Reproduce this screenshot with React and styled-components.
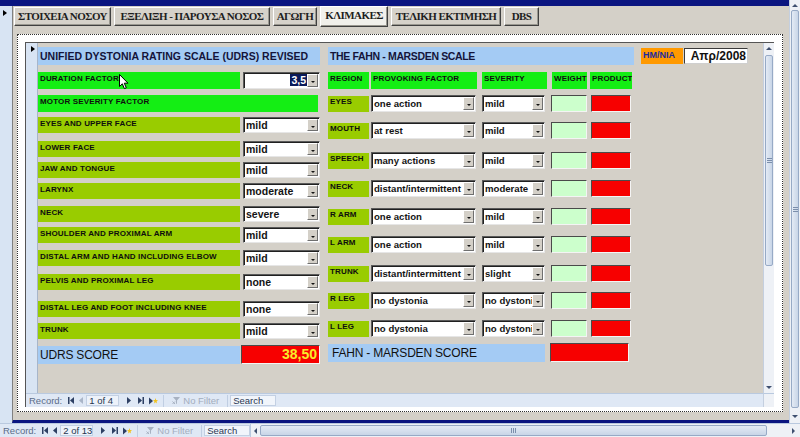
import React from 'react';
import styled, { createGlobalStyle } from 'styled-components';

const Global = createGlobalStyle`
  html, body {
    margin: 0;
    padding: 0;
    background: #d4d0c8;
  }
  body {
    width: 800px;
    height: 437px;
    overflow: hidden;
    font-family: "Liberation Sans", Arial, sans-serif;
  }
`;

const NAVY = '#0a1580';
const GRAY = '#d4d0c8';
const SEL = '#d8e4f3';
const SKY = '#a4cbf4';
const LIME = '#14ee14';
const OLIVE = '#99cc00';
const RED = '#f70000';

const Screen = styled.div`
  width: 800px;
  height: 437px;
  display: flex;
  flex-direction: column;
  overflow: hidden;
  position: relative;
`;

const Window = styled.div`
  height: 423px;
  display: flex;
`;

const LeftPane = styled.div`
  flex: 1;
  display: flex;
  flex-direction: column;
`;

const NavyTop = styled.div`
  height: 6px;
  background: ${NAVY};
`;

const Body = styled.div`
  flex: 1;
  display: flex;
`;

const Selector = styled.div`
  width: ${p => p.$w}px;
  background: ${SEL};
  flex: none;
  padding-top: ${p => p.$top}px;
  padding-left: ${p => p.$left}px;
  box-sizing: border-box;
  border-right: ${p => (p.$line ? '1px solid #a7b5c9' : 'none')};
`;

const Pointer = styled.div`
  width: 0;
  height: 0;
  border-top: 3px solid transparent;
  border-bottom: 3px solid transparent;
  border-left: 4px solid #000;
`;

const FormArea = styled.div`
  flex: 1;
  display: flex;
  flex-direction: column;
  background: ${GRAY};
  border-left: 1px solid #808080;
  border-bottom: 3px solid ${NAVY};
`;

const Tabs = styled.div`
  height: 21px;
  display: flex;
  gap: 3px;
  padding: 1px 0 0 1px;
  box-sizing: border-box;
`;

const Tab = styled.div`
  width: ${p => p.$w}px;
  height: ${p => (p.$active ? 21 : 19)}px;
  margin-top: ${p => (p.$active ? -1 : 0)}px;
  box-sizing: border-box;
  background: ${p => (p.$active ? '#f1f0eb' : '#d6d2ca')};
  border: 1px solid;
  border-color: #ffffff #404040 #404040 #ffffff;
  box-shadow: inset -1px -1px 0 #9a9890;
  font: bold 11px/17px "Liberation Serif", "Times New Roman", serif;
  letter-spacing: -0.55px;
  color: #1e1e1e;
  text-align: center;
  white-space: nowrap;
  overflow: hidden;
`;

const TabPage = styled.div`
  flex: 1;
  display: flex;
  padding: 7px 6px 8px 4px;
`;

const Dotted = styled.div`
  flex: 1;
  display: flex;
  background: #fff;
  border: 1px dotted #303030;
  padding: 7px 8px 4px 7px;
`;

const Subform = styled.div`
  flex: 1;
  display: grid;
  grid-template-columns: 12px 1fr 11px;
  grid-template-rows: 1fr 14px;
  border-top: 1px solid #555;
  border-left: 1px solid #555;
`;

const Content = styled.div`
  background: ${GRAY};
  display: flex;
  padding-top: 4px;
  position: relative;
`;

const Column = styled.div`
  width: ${p => p.$w}px;
  margin-left: ${p => p.$ml || 0}px;
  display: flex;
  flex-direction: column;
`;

const Row = styled.div`
  display: flex;
  align-items: ${p => p.$align || 'flex-start'};
  gap: ${p => p.$gap || 0}px;
  margin-top: ${p => p.$mt || 0}px;
`;

const Title = styled.div`
  width: ${p => p.$w}px;
  height: 18px;
  background: ${SKY};
  font: bold 10.5px/19px "Liberation Sans", Arial, sans-serif;
  letter-spacing: ${p => p.$ls || 0}px;
  color: #14143a;
  padding-left: 2px;
  box-sizing: border-box;
  white-space: nowrap;
`;

const Label = styled.div`
  width: ${p => p.$w}px;
  height: ${p => p.$h || 17}px;
  margin-left: ${p => p.$ml || 0}px;
  margin-top: ${p => p.$top || 0}px;
  background: ${p => p.$bg};
  font: bold 8px/10px "Liberation Sans", Arial, sans-serif;
  letter-spacing: 0.15px;
  color: #0e0e0e;
  padding: ${p => (p.$pad != null ? p.$pad : 2)}px 2px 0;
  box-sizing: border-box;
  white-space: nowrap;
  overflow: hidden;
  flex: none;
`;

const Combo = styled.div`
  width: ${p => p.$w}px;
  height: ${p => p.$h || 17}px;
  margin-left: ${p => p.$ml || 0}px;
  box-sizing: border-box;
  background: #fff;
  border: 1px solid;
  border-color: #5a5a5a #e6e6e6 #e6e6e6 #5a5a5a;
  box-shadow: inset 1px 1px 0 #202020;
  display: flex;
  flex: none;
`;

const ComboText = styled.div`
  flex: 1;
  min-width: 0;
  overflow: hidden;
  white-space: nowrap;
  padding-left: 2px;
  font: bold ${p => p.$size}px/${p => p.$lh}px "Liberation Sans", Arial, sans-serif;
  color: #141414;
  text-align: ${p => (p.$right ? 'right' : 'left')};
`;

const Picked = styled.span`
  background: #0a1a5a;
  color: #fff;
  padding: 0 1px;
`;

const DropBtn = styled.div`
  width: 11px;
  margin: 1px 1px 1px 0;
  background: ${GRAY};
  border: 1px solid;
  border-color: #fff #6f6f6f #6f6f6f #fff;
  box-sizing: border-box;
  display: flex;
  align-items: center;
  justify-content: center;
  flex: none;
  &::before {
    content: '';
    border-left: 2px solid transparent;
    border-right: 2px solid transparent;
    border-top: 2px solid #111;
    margin-top: 3px;
  }
`;

const Box = styled.div`
  width: ${p => p.$w}px;
  height: ${p => p.$h || 17}px;
  margin-left: ${p => p.$ml || 0}px;
  background: ${p => p.$bg};
  box-sizing: border-box;
  border: 1px solid;
  border-color: #4a4a4a #f4f4f4 #f4f4f4 #4a4a4a;
  flex: none;
  font: bold 14px/17px "Liberation Sans", Arial, sans-serif;
  color: #f8ec2a;
  text-align: right;
  padding-right: 2px;
`;

const Score = styled.div`
  width: ${p => p.$w}px;
  height: 18px;
  background: ${SKY};
  font: 12px/19px "Liberation Sans", Arial, sans-serif;
  letter-spacing: -0.2px;
  color: #111;
  padding-left: ${p => p.$pl}px;
  box-sizing: border-box;
  white-space: nowrap;
`;

const DateTag = styled.div`
  width: 42px;
  height: 16px;
  background: #ff9900;
  font: bold 9px/15px "Liberation Sans", Arial, sans-serif;
  color: #1c2b9e;
  padding-left: 2px;
  box-sizing: border-box;
`;

const DateValue = styled.div`
  width: 64px;
  height: 16px;
  margin-left: 1px;
  background: #fff;
  border: 1px solid;
  border-color: #3a3a3a #cfcfcf #cfcfcf #3a3a3a;
  box-sizing: border-box;
  font: bold 12px/14px "Liberation Sans", Arial, sans-serif;
  color: #111;
  text-align: right;
  padding-right: 1px;
`;

const ScrollCol = styled.div`
  width: ${p => p.$w}px;
  flex: none;
  display: flex;
  flex-direction: column;
  background: #eef1f6;
  border-left: 1px solid #c4cfdf;
  box-sizing: border-box;
`;

const Arrow = styled.div`
  height: ${p => p.$h}px;
  flex: none;
  display: flex;
  align-items: center;
  justify-content: center;
  &::before {
    content: '';
    border-left: 3px solid transparent;
    border-right: 3px solid transparent;
    ${p => (p.$down ? 'border-top: 3px solid #3f5070;' : 'border-bottom: 3px solid #3f5070;')}
  }
`;

const Track = styled.div`
  flex: 1;
  padding: 0 1px;
  display: flex;
  flex-direction: column;
`;

const Thumb = styled.div`
  height: ${p => p.$h}px;
  margin-top: ${p => p.$top}px;
  background: linear-gradient(to right, #e4ebf5, #c8d5e7);
  border: 1px solid #97aac6;
  border-radius: 2px;
  box-sizing: border-box;
  display: flex;
  align-items: center;
  justify-content: center;
  &::after {
    content: '';
    width: 5px;
    height: 5px;
    background: repeating-linear-gradient(to bottom, #7b8eab 0 1px, transparent 1px 2px);
  }
`;

const Corner = styled.div`
  background: #eef1f6;
  border-left: 1px solid #c4cfdf;
  border-top: 1px solid #b9c9df;
`;

const NavBar = styled.div`
  display: flex;
  align-items: center;
  width: ${p => (p.$w ? `${p.$w}px` : 'auto')};
  grid-column: ${p => p.$span || 'auto'};
  flex: none;
  background: #dfe8f5;
  border-top: 1px solid #b9c9df;
  box-sizing: border-box;
  font: 9.5px "Liberation Sans", Arial, sans-serif;
  color: #5b6c88;
  white-space: nowrap;
  overflow: hidden;
`;

const NavText = styled.span`
  margin-left: ${p => p.$ml}px;
  color: ${p => p.$c || '#5b6c88'};
`;

const NavIcon = styled.svg`
  margin-left: ${p => p.$ml}px;
  flex: none;
`;

const RecBox = styled.span`
  margin-left: ${p => p.$ml}px;
  width: 33px;
  height: 11px;
  background: #edf2fa;
  border: 1px solid #c3d0e3;
  box-sizing: border-box;
  font-size: 9.5px;
  line-height: 10px;
  color: #26344e;
  padding-left: 2px;
  flex: none;
`;

const Sep = styled.span`
  margin-left: ${p => p.$ml}px;
  width: 1px;
  height: 12px;
  background: #c0cee2;
  flex: none;
`;

const SearchBox = styled.span`
  margin-left: ${p => p.$ml}px;
  width: 46px;
  height: 11px;
  background: #f1f5fb;
  border: 1px solid #c3d0e3;
  box-sizing: border-box;
  font-size: 9.5px;
  line-height: 10px;
  color: #2b3852;
  padding-left: 2px;
  flex: none;
`;

const BottomBar = styled.div`
  height: 14px;
  display: flex;
`;

const HScroll = styled.div`
  flex: 1;
  display: flex;
  align-items: stretch;
  background: #eef1f6;
  border-top: 1px solid #b9c9df;
  border-left: 1px solid #b9c9df;
`;

const HArrow = styled.div`
  width: ${p => p.$w}px;
  display: flex;
  align-items: center;
  justify-content: center;
  &::before {
    content: '';
    border-top: 3px solid transparent;
    border-bottom: 3px solid transparent;
    ${p => (p.$right ? 'border-left: 3px solid #3f5070;' : 'border-right: 3px solid #3f5070;')}
  }
`;

const HThumb = styled.div`
  width: ${p => p.$w}px;
  margin: 1px 0 1px ${p => p.$ml}px;
  background: linear-gradient(to bottom, #e4ebf5, #c8d5e7);
  border: 1px solid #97aac6;
  border-radius: 2px;
  box-sizing: border-box;
  display: flex;
  align-items: center;
  justify-content: center;
  &::after {
    content: '';
    width: 5px;
    height: 5px;
    background: repeating-linear-gradient(to right, #7b8eab 0 1px, transparent 1px 2px);
  }
`;

const Filler = styled.div`
  flex: 1;
`;

const Cursor = styled.svg`
  position: absolute;
  left: ${p => p.$x}px;
  top: ${p => p.$y}px;
`;

const tabs = [
  { text: 'ΣΤΟΙΧΕΙΑ ΝΟΣΟΥ', w: 97 },
  { text: 'ΕΞΕΛΙΞΗ - ΠΑΡΟΥΣΑ ΝΟΣΟΣ', w: 156 },
  { text: 'ΑΓΩΓΗ', w: 44 },
  { text: 'ΚΛΙΜΑΚΕΣ', w: 68, active: true },
  { text: 'ΤΕΛΙΚΗ ΕΚΤΙΜΗΣΗ', w: 110 },
  { text: 'DBS', w: 35 },
];

const udrsRows = [
  { label: 'EYES AND UPPER FACE', value: 'mild', mt: 5 },
  { label: 'LOWER FACE', value: 'mild', mt: 8 },
  { label: 'JAW AND TONGUE', value: 'mild', mt: 5 },
  { label: 'LARYNX', value: 'moderate', mt: 5 },
  { label: 'NECK', value: 'severe', mt: 7 },
  { label: 'SHOULDER AND PROXIMAL ARM', value: 'mild', mt: 5 },
  { label: 'DISTAL ARM AND HAND INCLUDING ELBOW', value: 'mild', mt: 7 },
  { label: 'PELVIS AND PROXIMAL LEG', value: 'none', mt: 8 },
  { label: 'DISTAL LEG AND FOOT INCLUDING KNEE', value: 'none', mt: 11 },
  { label: 'TRUNK', value: 'mild', mt: 6 },
];

const fahnHead = [
  { text: 'REGION', w: 41, ml: 0 },
  { text: 'PROVOKING FACTOR', w: 106, ml: 2 },
  { text: 'SEVERITY', w: 65, ml: 5 },
  { text: 'WEIGHT', w: 35, ml: 5 },
  { text: 'PRODUCT', w: 42, ml: 3 },
];

const fahnRows = [
  { region: 'EYES', factor: 'one action', severity: 'mild', mt: 6 },
  { region: 'MOUTH', factor: 'at rest', severity: 'mild', mt: 10 },
  { region: 'SPEECH', factor: 'many actions', severity: 'mild', mt: 13 },
  { region: 'NECK', factor: 'distant/intermittent', severity: 'moderate', mt: 11 },
  { region: 'R ARM', factor: 'one action', severity: 'mild', mt: 11 },
  { region: 'L ARM', factor: 'one action', severity: 'mild', mt: 11 },
  { region: 'TRUNK', factor: 'distant/intermittent', severity: 'slight', mt: 12 },
  { region: 'R LEG', factor: 'no dystonia', severity: 'no dystonia', mt: 10 },
  { region: 'L LEG', factor: 'no dystonia', severity: 'no dystonia', mt: 11 },
];

const Select = ({ w, h = 17, ml, size, children, right }) => (
  <Combo $w={w} $h={h} $ml={ml}>
    <ComboText $size={size} $lh={h - 2} $right={right}>{children}</ComboText>
    <DropBtn />
  </Combo>
);

const First = ({ ml }) => (
  <NavIcon $ml={ml} width="6" height="7" viewBox="0 0 6 7">
    <rect x="0" y="0" width="1.5" height="7" fill="#2d3f63" />
    <path d="M6 0 L2 3.5 L6 7 Z" fill="#2d3f63" />
  </NavIcon>
);
const Prev = ({ ml, c }) => (
  <NavIcon $ml={ml} width="4" height="7" viewBox="0 0 4 7">
    <path d="M4 0 L0 3.5 L4 7 Z" fill={c} />
  </NavIcon>
);
const Next = ({ ml }) => (
  <NavIcon $ml={ml} width="4" height="7" viewBox="0 0 4 7">
    <path d="M0 0 L4 3.5 L0 7 Z" fill="#2d3f63" />
  </NavIcon>
);
const Last = ({ ml }) => (
  <NavIcon $ml={ml} width="6" height="7" viewBox="0 0 6 7">
    <path d="M0 0 L4 3.5 L0 7 Z" fill="#2d3f63" />
    <rect x="4.5" y="0" width="1.5" height="7" fill="#2d3f63" />
  </NavIcon>
);
const New = ({ ml }) => (
  <NavIcon $ml={ml} width="9" height="8" viewBox="0 0 9 8">
    <path d="M0 0.5 L4 4 L0 7.5 Z" fill="#2d3f63" />
    <path d="M6.5 1 L7.1 3 L9 3.2 L7.5 4.4 L8 6.5 L6.5 5.3 L5 6.5 L5.5 4.4 L4 3.2 L5.9 3 Z" fill="#f2c21a" />
  </NavIcon>
);
const Funnel = ({ ml }) => (
  <NavIcon $ml={ml} width="9" height="9" viewBox="0 0 9 9">
    <path d="M1 1 L8 1 L5 4.5 L5 8 L4 7.5 L4 4.5 Z" fill="#a8b2c2" />
    <path d="M0.5 5.5 L3 8 M3 5.5 L0.5 8" stroke="#a8b2c2" strokeWidth="1" />
  </NavIcon>
);

const RecordNav = ({ w, span, count, dimPrev }) => (
  <NavBar $w={w} $span={span}>
    <NavText $ml={3}>Record:</NavText>
    <First ml={6} />
    <Prev ml={5} c={dimPrev ? '#a9b5c8' : '#2d3f63'} />
    <RecBox $ml={3}>{count}</RecBox>
    <Next ml={8} />
    <Last ml={7} />
    <New ml={5} />
    <Sep $ml={5} />
    <Funnel ml={8} />
    <NavText $ml={2} $c="#a3adbd">No Filter</NavText>
    <Sep $ml={8} />
    <SearchBox $ml={2}>Search</SearchBox>
    {w ? <Sep $ml={18} /> : null}
  </NavBar>
);

export default function App() {
  return (
    <Screen>
      <Global />
      <Window>
        <LeftPane>
          <NavyTop />
          <Body>
            <Selector $w={12} $top={4} $left={3}>
              <Pointer />
            </Selector>
            <FormArea>
              <Tabs>
                {tabs.map(t => (
                  <Tab key={t.text} $w={t.w} $active={t.active}>{t.text}</Tab>
                ))}
              </Tabs>
              <TabPage>
                <Dotted>
                  <Subform>
                    <Selector $w={12} $top={3} $left={5} $line>
                      <Pointer />
                    </Selector>
                    <Content>
                      <Column $w={282}>
                        <Title $w={282}>UNIFIED DYSTONIA RATING SCALE (UDRS) REVISED</Title>
                        <Row $gap={3} $mt={7}>
                          <Label $w={202} $bg={LIME}>DURATION FACTOR</Label>
                          <Select w={77} size={10.5} right>
                            <Picked>3,5</Picked>
                          </Select>
                        </Row>
                        <Row $mt={6}>
                          <Label $w={280} $bg={LIME}>MOTOR SEVERITY FACTOR</Label>
                        </Row>
                        {udrsRows.map(r => (
                          <Row key={r.label} $gap={3} $mt={r.mt}>
                            <Label $w={202} $h={16} $bg={OLIVE}>{r.label}</Label>
                            <Select w={77} h={16} size={10.5}>{r.value}</Select>
                          </Row>
                        ))}
                        <Row $gap={1} $mt={6} $align="center">
                          <Score $w={202} $pl={2}>UDRS SCORE</Score>
                          <Box $w={79} $h={19} $bg={RED}>38,50</Box>
                        </Row>
                      </Column>

                      <Column $w={306} $ml={8}>
                        <Title $w={306} $ls={-0.35}>THE FAHN - MARSDEN SCALE</Title>
                        <Row $mt={7}>
                          {fahnHead.map(h => (
                            <Label key={h.text} $w={h.w} $ml={h.ml} $bg={LIME}>{h.text}</Label>
                          ))}
                        </Row>
                        {fahnRows.map(r => (
                          <Row key={r.region} $mt={r.mt}>
                            <Label $w={41} $h={16} $top={1} $pad={1} $bg={OLIVE}>{r.region}</Label>
                            <Select w={105} ml={2} size={9.6}>{r.factor}</Select>
                            <Select w={63} ml={6} size={9.6}>{r.severity}</Select>
                            <Box $w={36} $ml={6} $bg="#ccffcc" />
                            <Box $w={40} $ml={4} $bg={RED} />
                          </Row>
                        ))}
                        <Row $gap={5} $mt={6} $align="center">
                          <Score $w={217} $pl={4}>FAHN - MARSDEN SCORE</Score>
                          <Box $w={79} $h={19} $bg={RED} />
                        </Row>
                      </Column>

                      <Column $w={110} $ml={7}>
                        <Row $mt={1}>
                          <DateTag>ΗΜ/ΝΙΑ</DateTag>
                          <DateValue>Απρ/2008</DateValue>
                        </Row>
                      </Column>

                      <Cursor $x={81} $y={31} width="10" height="16" viewBox="0 0 10 16">
                        <path d="M0.5 0.5 L0.5 12.5 L3.3 9.8 L5.4 14.6 L7.3 13.8 L5.3 9.2 L9 9.2 Z" fill="#fff" stroke="#000" strokeWidth="1" />
                      </Cursor>
                    </Content>
                    <ScrollCol $w={11}>
                      <Arrow $h={10} />
                      <Track>
                        <Thumb $h={211} $top={2} />
                      </Track>
                      <Arrow $h={12} $down />
                    </ScrollCol>
                    <RecordNav span="1 / 3" count="1 of 4" dimPrev />
                    <Corner />
                  </Subform>
                </Dotted>
              </TabPage>
            </FormArea>
          </Body>
        </LeftPane>
        <ScrollCol $w={11}>
          <Arrow $h={10} />
          <Track>
            <Thumb $h={398} $top={0} />
          </Track>
          <Arrow $h={13} $down />
        </ScrollCol>
      </Window>
      <BottomBar>
        <RecordNav w={250} count="2 of 13" />
        <HScroll>
          <HArrow $w={8} />
          <HThumb $w={507} $ml={1} />
          <Filler />
          <HArrow $w={14} $right />
        </HScroll>
      </BottomBar>
    </Screen>
  );
}
